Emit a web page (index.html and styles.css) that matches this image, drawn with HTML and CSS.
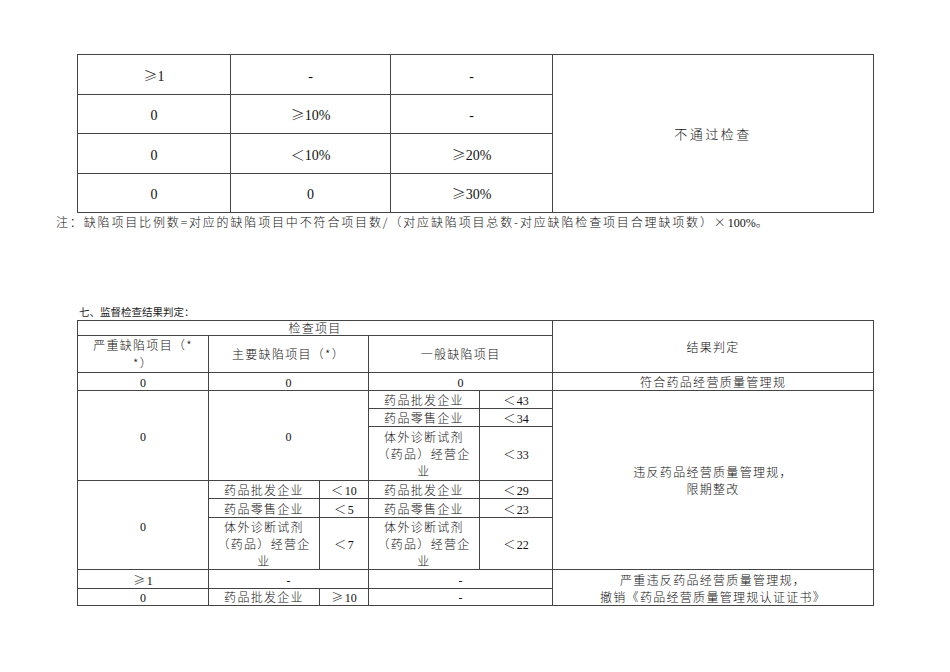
FILE: index.html
```html
<!DOCTYPE html>
<html lang="zh-CN">
<head>
<meta charset="utf-8">
<title>监督检查结果判定</title>
<link rel="stylesheet" href="styles.css">
</head>
<body>
<div class="page">
  <table class="grid top">
    <colgroup>
      <col class="t1"><col class="t2"><col class="t3"><col class="t4">
    </colgroup>
    <tr class="tr40">
      <td>≥<span class="n">1</span></td>
      <td><span class="n">-</span></td>
      <td><span class="n">-</span></td>
      <td rowspan="4" class="big">不通过检查</td>
    </tr>
    <tr class="tr39">
      <td><span class="n">0</span></td>
      <td>≥<span class="n">10%</span></td>
      <td><span class="n">-</span></td>
    </tr>
    <tr class="tr40">
      <td><span class="n">0</span></td>
      <td>＜<span class="n">10%</span></td>
      <td>≥<span class="n">20%</span></td>
    </tr>
    <tr class="tr39">
      <td><span class="n">0</span></td>
      <td><span class="n">0</span></td>
      <td>≥<span class="n">30%</span></td>
    </tr>
  </table>
  <p class="note">注：缺陷项目比例数=对应的缺陷项目中不符合项目数/（对应缺陷项目总数-对应缺陷检查项目合理缺项数）×<span class="n">100%</span>。</p>

  <p class="heading">七、监督检查结果判定：</p>
  <table class="grid judge">
    <colgroup>
      <col class="c1"><col class="c2"><col class="c3"><col class="c4"><col class="c5"><col class="c6">
    </colgroup>
    <tr class="h15">
      <td colspan="5">检查项目</td>
      <td rowspan="2">结果判定</td>
    </tr>
    <tr class="h37">
      <td>严重缺陷项目（*<br>*）</td>
      <td colspan="2">主要缺陷项目（*）</td>
      <td colspan="2">一般缺陷项目</td>
    </tr>
    <tr class="h18">
      <td><span class="n">0</span></td>
      <td colspan="2"><span class="n">0</span></td>
      <td colspan="2"><span class="n">0</span></td>
      <td>符合药品经营质量管理规</td>
    </tr>
    <tr class="h18">
      <td rowspan="3"><span class="n">0</span></td>
      <td colspan="2" rowspan="3"><span class="n">0</span></td>
      <td>药品批发企业</td>
      <td>＜<span class="n">43</span></td>
      <td rowspan="6">违反药品经营质量管理规，<br>限期整改</td>
    </tr>
    <tr class="h18">
      <td>药品零售企业</td>
      <td>＜<span class="n">34</span></td>
    </tr>
    <tr class="h54">
      <td>体外诊断试剂<br>（药品）经营企<br>业</td>
      <td>＜<span class="n">33</span></td>
    </tr>
    <tr class="h18">
      <td rowspan="3"><span class="n">0</span></td>
      <td>药品批发企业</td>
      <td>＜<span class="n">10</span></td>
      <td>药品批发企业</td>
      <td>＜<span class="n">29</span></td>
    </tr>
    <tr class="h19">
      <td>药品零售企业</td>
      <td>＜<span class="n">5</span></td>
      <td>药品零售企业</td>
      <td>＜<span class="n">23</span></td>
    </tr>
    <tr class="h52">
      <td>体外诊断试剂<br>（药品）经营企<br>业</td>
      <td>＜<span class="n">7</span></td>
      <td>体外诊断试剂<br>（药品）经营企<br>业</td>
      <td>＜<span class="n">22</span></td>
    </tr>
    <tr class="h19">
      <td>≥<span class="n">1</span></td>
      <td colspan="2"><span class="n">-</span></td>
      <td colspan="2"><span class="n">-</span></td>
      <td rowspan="2">严重违反药品经营质量管理规，<br>撤销《药品经营质量管理规认证证书》</td>
    </tr>
    <tr class="h17">
      <td><span class="n">0</span></td>
      <td>药品批发企业</td>
      <td>≥<span class="n">10</span></td>
      <td colspan="2"><span class="n">-</span></td>
    </tr>
  </table>
</div>
</body>
</html>
```

FILE: styles.css
```css
html, body {
  margin: 0;
  padding: 0;
  background: #ffffff;
}

body {
  font-family: "Noto Sans CJK SC", sans-serif;
  font-weight: 300;
  color: #111111;
}

.page {
  padding: 54px 0 0 77px;
}

.grid {
  border-collapse: collapse;
  table-layout: fixed;
}

.grid td {
  border: 1px solid #444444;
  padding: 0;
  text-align: center;
  vertical-align: middle;
}

/* Latin digits, set in a Times-like serif */
.n {
  font-family: "Liberation Serif", serif;
  font-weight: 400;
  line-height: 1;
  letter-spacing: 0;
}

/* top table */
.top {
  width: 796px;
  font-size: 14px;
  line-height: 18px;
}

.top .n {
  font-size: 14px;
}

.t1 { width: 153px; }
.t2 { width: 160px; }
.t3 { width: 162px; }
.t4 { width: 321px; }

.tr40 { height: 40px; }
.tr39 { height: 39px; }

.big {
  font-size: 13px;
  letter-spacing: 2.5px;
}

.note {
  margin: 1px 0 0 -21px;
  font-size: 12px;
  line-height: 16px;
  letter-spacing: 1.85px;
  white-space: nowrap;
}

.note .n {
  font-size: 12px;
}

.heading {
  margin: 75px 0 1px 2px;
  font-size: 10.5px;
  font-weight: 400;
  line-height: 14px;
  color: #222222;
}

/* judgement table */
.judge {
  width: 796px;
  font-size: 12px;
  line-height: 17px;
}

.judge td {
  letter-spacing: 1.3px;
}

.c1 { width: 131px; }
.c2 { width: 111px; }
.c3 { width: 49px; }
.c4 { width: 111px; }
.c5 { width: 73px; }
.c6 { width: 321px; }

.h15 { height: 15px; }
.h15 td { line-height: 14px; }
.h17 { height: 17px; }
.h17 td { line-height: 16px; }
.h18 { height: 18px; }
.h19 { height: 19px; }
.h37 { height: 37px; }
.h37 td { line-height: 18px; }
.h52 { height: 52px; }
.h54 { height: 54px; }
```
